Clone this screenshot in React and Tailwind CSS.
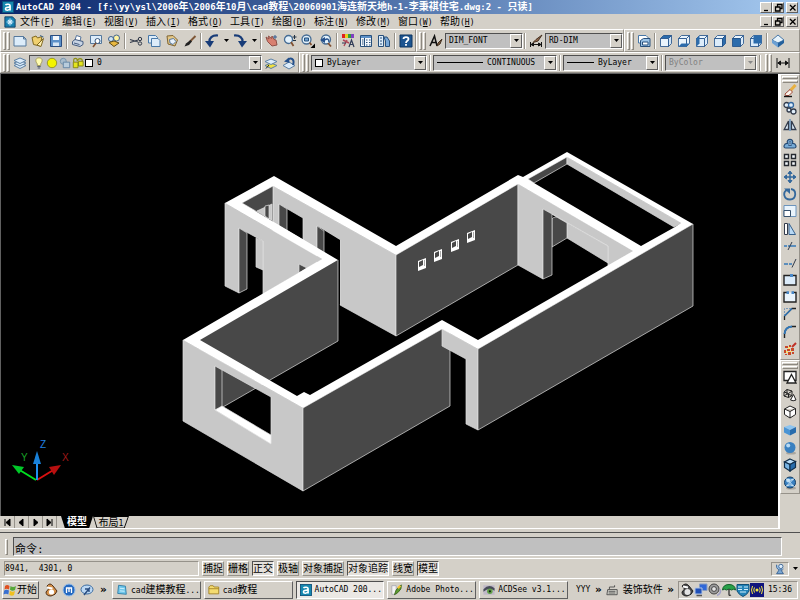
import React from "react";

const raised = "border border-t-white border-l-white border-r-[#606060] border-b-[#606060] bg-[#d4d0c8]";
const sunken = "border border-t-[#505050] border-l-[#505050] border-r-white border-b-white";

const menus = [
    ["文件", "F"], ["编辑", "E"], ["视图", "V"], ["插入", "I"], ["格式", "O"], ["工具", "T"],
    ["绘图", "D"], ["标注", "N"], ["修改", "M"], ["窗口", "W"], ["帮助", "H"],
];

const modifyTools = [
    "erase", "copy", "mirror", "offset", "array", "move", "rotate", "scale",
    "stretch", "trim", "extend", "breakPoint", "breakLine", "chamfer", "fillet", "explode",
];
const shadeTools = ["wire2d", "wire3d", "hidden", "flat", "gouraud", "flatEdges", "gouraudEdges"];

const modes = [
    ["捕捉", false], ["栅格", false], ["正交", true], ["极轴", false],
    ["对象捕捉", false], ["对象追踪", true], ["线宽", false], ["模型", true],
];

const tasks = [
    ["notepad", "cad建模教程..."],
    ["folder", "cad教程"],
    ["acad", "AutoCAD 200..."],
    ["photoshop", "Adobe Photo..."],
    ["acdsee", "ACDSee v3.1..."],
];

function cube(top, front, side) {
    return (
        <g stroke="#1c4c86" strokeWidth="0.8">
            <path d="M1.5 4.5 4.5 1.5H12.5L9.5 4.5Z" fill={top} />
            <path d="M1.5 4.5H9.5V12.5H1.5Z" fill={front} />
            <path d="M9.5 4.5 12.5 1.5V9.5L9.5 12.5Z" fill={side} />
        </g>
    );
}

const acad = (
    <>
        <rect x="0.5" y="0.5" width="13" height="13" fill="#1688b0" stroke="#0c4f78" />
        <path d="M4 4.8C5 3.4 9.5 3.2 9.5 6V11M9.5 7.2C6 7 4 7.6 4 9.2S8 11.6 9.5 9" fill="none" stroke="#fff" strokeWidth="1.8" />
    </>
);

const disc = (
    <>
        <ellipse cx="8" cy="12" rx="5" ry="1.6" fill="#a9a59e" />
        <circle cx="7" cy="6.5" r="5.5" fill="#3a80c0" />
        <circle cx="5.2" cy="4.5" r="2" fill="#b8daf4" />
    </>
);

const icons = {
    acad,
    child: (
        <>
            <path d="M1 1H10L13 4V13H1Z" fill="#1680b0" stroke="#103c60" />
            <path d="M7 3V11M3 7H11M4.5 4.5 9.5 9.5M9.5 4.5 4.5 9.5" stroke="#d8f0ff" strokeWidth="1.2" />
        </>
    ),
    new: <path d="M1 2.5H10.5L13 5V12H1Z M10.5 2.5V5H13" fill="#dcecfa" stroke="#55789c" />,
    open: (
        <>
            <path d="M1 3.5 5 2 6.5 4 11 2.5 9 12 2.5 10.5Z" fill="#f0d070" stroke="#806820" />
            <path d="M6 11 12.5 4.5 10 12.5Z" fill="#fff0b0" stroke="#806820" />
            <path d="M9 1.5 12.5 3" stroke="#406890" />
        </>
    ),
    save: (
        <>
            <path d="M1.5 1.5H12.5V12.5H1.5Z" fill="#5c90c8" stroke="#284c80" />
            <path d="M4 2H10V6H4Z" fill="#f4f8fc" />
            <path d="M4 8.5H10V12H4Z" fill="#d4e4f4" />
        </>
    ),
    print: (
        <>
            <path d="M4 6 5.5 1.5 10 3 9 7" fill="#fff" stroke="#54749c" />
            <path d="M1.5 7.5 4 5.5 12 7.5V10.5L9 12.5 1.5 10.5Z" fill="#c8d4e4" stroke="#445c80" />
            <path d="M3 9 8.5 10.5" stroke="#445c80" />
        </>
    ),
    preview: (
        <>
            <path d="M1.5 1.5H12.5V9.5H1.5Z" fill="#dcecfa" stroke="#55789c" />
            <circle cx="8.5" cy="7" r="2.5" fill="#fff" stroke="#33557c" />
            <path d="M7 9 4 13" stroke="#805030" strokeWidth="1.5" />
        </>
    ),
    publish: (
        <>
            <circle cx="9.5" cy="4" r="3" fill="#fff3a0" stroke="#406490" />
            <circle cx="4" cy="5" r="2.5" fill="#d0e4f4" stroke="#406490" />
            <path d="M2 8.5 7 7 12 9 7 12.5Z" fill="#e8b840" stroke="#604c18" />
        </>
    ),
    cut: (
        <g fill="none" stroke="#303848">
            <path d="M1 5.5 9 8M1 8.5 9 6" strokeWidth="1.2" />
            <circle cx="11" cy="5" r="1.7" />
            <circle cx="11" cy="9.5" r="1.7" />
        </g>
    ),
    copyclip: (
        <g fill="#dcecfa" stroke="#4878a8">
            <path d="M1.5 1.5H8.5L10.5 3.5V9H1.5Z" />
            <path d="M4.5 4.5H11L13 6.5V12.5H4.5Z" />
        </g>
    ),
    paste: (
        <>
            <path d="M2 2 8 1.5 12.5 6 10 12 3 10Z" fill="#e4c888" stroke="#806430" />
            <path d="M4.5 5.5 8.5 4.5 11 7.5 8 10.5 5 9Z" fill="#e8f2fc" stroke="#54749c" />
        </>
    ),
    match: (
        <>
            <path d="M12.5 2 7 7.5" stroke="#805838" strokeWidth="2" />
            <path d="M7.5 6 3 9.5 1.5 12.5 6 11 9 7.5Z" fill="#202020" />
        </>
    ),
    undo: (
        <>
            <path d="M13 1.5C7 1 4 4 4.5 8.5" fill="none" stroke="#183c78" strokeWidth="2.2" />
            <path d="M0 7H9L5 13.5Z" fill="#183c78" />
        </>
    ),
    redo: (
        <>
            <path d="M1 1.5C7 1 10 4 9.5 8.5" fill="none" stroke="#183c78" strokeWidth="2.2" />
            <path d="M14 7H5L9 13.5Z" fill="#183c78" />
        </>
    ),
    pan: (
        <>
            <path d="M1 3 4 5 3.5 2 6.5 4.5 7 2 9 5.5 11 6 12 11 7 12 2.5 7.5Z" fill="#d88070" stroke="#905048" />
            <path d="M10 1V5M8 3H12" stroke="#345c90" />
        </>
    ),
    zoom: (
        <>
            <circle cx="5.5" cy="5.5" r="4" fill="#e4f2fc" stroke="#466c94" strokeWidth="1.3" />
            <path d="M8 8 10.5 12" stroke="#805030" strokeWidth="1.8" />
            <path d="M11.5 1V5M9.5 3H13.5M10 6.5H13" stroke="#234" />
        </>
    ),
    zoomWin: (
        <>
            <circle cx="5.5" cy="5.5" r="4.5" fill="#e4f2fc" stroke="#466c94" strokeWidth="1.3" />
            <path d="M3.5 4H7.5V7H3.5Z" fill="#74a4d4" stroke="#24507c" />
            <path d="M8.5 8.5 10.5 11" stroke="#805030" strokeWidth="1.8" />
            <path d="M14 9.5V14H9.5Z" fill="#000" />
        </>
    ),
    zoomPrev: (
        <>
            <circle cx="7" cy="5.5" r="4.5" fill="#e4f2fc" stroke="#466c94" strokeWidth="1.3" />
            <path d="M1 6 6 3V9Z" fill="#24508c" />
            <path d="M6 6C8 4 10 5 10 8" fill="none" stroke="#24508c" strokeWidth="1.5" />
            <path d="M9 9 12 12.5" stroke="#805030" strokeWidth="1.8" />
        </>
    ),
    props: (
        <>
            <path d="M1 0H4V4H1Z" fill="#e02020" />
            <path d="M4 0H7V4H4Z" fill="#e8d020" />
            <path d="M7 0H10V4H7Z" fill="#30a040" />
            <path d="M10 0H13V4H10Z" fill="#8040c0" />
            <path d="M2 6 8 9M3 12 6 6" fill="none" stroke="#b04858" strokeWidth="1.4" />
            <path d="M8 13 10.5 6 13 13M9 10.5H12M1 9H5" fill="none" stroke="#303c58" strokeWidth="1.2" />
        </>
    ),
    design: (
        <>
            <path d="M1.5 1.5H12.5V12.5H1.5Z" fill="#f4f8fc" stroke="#28507c" />
            <path d="M2 2H12V4H2Z" fill="#5c90c8" />
            <path d="M5.5 4V12M3 6H4.5M3 8H4.5M3 10H4.5M7 6H8.5M10 6H11.5M7 8.5H8.5M10 8.5H11.5M7 11H8.5M10 11H11.5" stroke="#28507c" />
        </>
    ),
    palette: (
        <>
            <path d="M1.5 1.5H6.5V12.5H1.5Z" fill="#dcecfa" stroke="#28507c" />
            <path d="M3 4H5M3 7H5M3 10H5" stroke="#28507c" />
            <path d="M7 3H10L12.5 7V12.5H8.5V7Z" fill="#78a8d8" stroke="#28507c" />
        </>
    ),
    help: (
        <>
            <path d="M1 1H13V13H1Z" fill="#1c5490" stroke="#0c3460" />
            <path d="M4.5 5C4.5 2.5 9.5 2.5 9.5 5 9.5 6.8 7 6.8 7 9M7 10V11.8" fill="none" stroke="#fff" strokeWidth="1.8" />
        </>
    ),
    textStyle: (
        <>
            <path d="M1 12 5.5 2 8 12M3 8.5H8" fill="none" stroke="#111" strokeWidth="1.5" />
            <path d="M13 5 9 9 8 12 11 10Z" fill="#806040" stroke="#443020" />
        </>
    ),
    dimStyle: (
        <>
            <path d="M1.5 8V13M12.5 8V13M2 10.5H12M2 10.5 4.5 9V12ZM12 10.5 9.5 9V12Z" stroke="#111" fill="#111" />
            <path d="M13 1 7 5.5 4 8.5 9 7Z" fill="#94684c" stroke="#443020" />
        </>
    ),
    namedViews: (
        <>
            <path d="M1.5 1.5H9L11.5 4V9H1.5Z" fill="#fff" stroke="#4878a8" />
            <path d="M3.5 6.5 6.5 4.5H13V12.5H3.5Z" fill="#9cc4e8" stroke="#28507c" />
            <path d="M5.5 8H11V11H5.5Z" fill="#fff" stroke="#28507c" />
        </>
    ),
    top: cube("#2c6cac", "#eaf4fc", "#cfe2f4"),
    bottom: (
        <>
            {cube("#eaf4fc", "#eaf4fc", "#eaf4fc")}
            <path d="M1.5 12.5 4.5 9.5H12.5L9.5 12.5Z" fill="#2c6cac" />
        </>
    ),
    left: (
        <>
            {cube("#eaf4fc", "#dcecfa", "#dcecfa")}
            <path d="M1.5 4.5 4.5 1.5V9.5L1.5 12.5Z" fill="#2c6cac" />
        </>
    ),
    right: cube("#eaf4fc", "#dcecfa", "#2c6cac"),
    front: cube("#eaf4fc", "#2c6cac", "#dcecfa"),
    back: (
        <>
            {cube("#dcecfa", "#dcecfa", "#cfe2f4")}
            <path d="M4.5 1.5H12.5V9.5H4.5Z" fill="#2c6cac" />
        </>
    ),
    iso: (
        <>
            <path d="M7 1 13 6 7 9 1 6Z" fill="#e8f4fc" stroke="#4878a8" />
            <path d="M1 6 7 9V13.5L1 9Z" fill="#6ca0d4" />
            <path d="M13 6 7 9V13.5L13 9Z" fill="#24609c" />
        </>
    ),
    layers: (
        <g fill="#dcecfa" stroke="#5c80a4">
            <path d="M1 9.5 7 7 13 9.5 7 12.5Z" />
            <path d="M1 7 7 4.5 13 7 7 10Z" />
            <path d="M1 4.5 7 2 13 4.5 7 7.5Z" />
        </g>
    ),
    layerSet: (
        <g stroke="#5c80a4">
            <path d="M1 9.5 7 7 13 9.5 7 12.5Z" fill="#f0e040" />
            <path d="M1 5.5 7 3 13 5.5 7 8.5Z" fill="#dcecfa" />
            <path d="M2 12.5 5 9" stroke="#222" />
        </g>
    ),
    layerPrev: (
        <>
            <path d="M1 9.5 7 6 13 9.5 7 13Z" fill="#dcecfa" stroke="#5c80a4" />
            <path d="M11 9C13 3 9 1 5.5 4" fill="none" stroke="#24508c" strokeWidth="2" />
            <path d="M2 5.5 7 1.5 7.5 7Z" fill="#24508c" />
        </>
    ),
    bulb: (
        <>
            <path d="M7 1C2 1 3 6 5 8V10H9V8C11 6 12 1 7 1Z" fill="#fffcb0" stroke="#a09850" />
            <path d="M5 11H9M5.5 12.8H8.5" stroke="#404860" />
        </>
    ),
    sun: <circle cx="7" cy="7" r="5.5" fill="#f4f400" stroke="#8c8c20" />,
    vpFreeze: (
        <>
            <circle cx="5" cy="5" r="3.5" fill="#a8bccc" stroke="#7090a8" />
            <path d="M5 6H12.5V12.5H5Z" fill="#b8ccdc" stroke="#5c80a0" />
        </>
    ),
    lock: (
        <>
            <path d="M2 6V3.5C2 1 6 1 6 3.5V5M6.5 4.5C7 1 12 1 12 4.5V7" fill="none" stroke="#909010" strokeWidth="1.3" />
            <path d="M1.5 6H7V12.5H1.5ZM7.5 5H13V10.5H7.5Z" fill="#e4e420" stroke="#808010" />
        </>
    ),
    dimLinear: <path d="M1 2V12M13 2V12M1.5 7H12.5M2 7 4.5 5V9ZM12 7 9.5 5V9Z" stroke="#111" fill="#111" />,
    erase: (
        <>
            <path d="M12.5 1 7 7" stroke="#e8b040" strokeWidth="3" />
            <path d="M7 5.5 9.5 8 6 11.5H2.5L2 10Z" fill="#fbf4ec" stroke="#a04838" />
            <path d="M1 12.5H9" stroke="#111" strokeWidth="1.4" />
        </>
    ),
    copy: (
        <g fill="#e0eefa" stroke="#333c4c" strokeWidth="1.3">
            <circle cx="3.5" cy="4" r="2.5" />
            <circle cx="8" cy="4" r="2.5" stroke="#3468a0" />
            <circle cx="6" cy="9" r="2" />
            <circle cx="10.5" cy="10.5" r="2.5" />
        </g>
    ),
    mirror: (
        <>
            <path d="M5.5 3V11.5H1.2ZM8.5 3V11.5H12.8Z" fill="#e0eefa" stroke="#333c4c" strokeWidth="1.3" />
            <path d="M7 1V13" stroke="#3878b8" />
        </>
    ),
    offset: (
        <>
            <path d="M4.5 7.5C2.5 2 11.5 2 9.500 7.500 13 7 14.5 12 11 12H3C-.5 12 1 7 4.500 7.500Z" fill="#78acd8" stroke="#284c74" strokeWidth="1.2" />
            <path d="M5.5 9.5C7 8 5.500 5 7 5S7 8 8.500 9.500Z" fill="#dcecfa" stroke="#345c88" />
        </>
    ),
    array: <path d="M1.5 1.5H5.5V5.5H1.5ZM8.5 1.5H12.5V5.5H8.5ZM1.5 8.5H5.5V12.5H1.5ZM8.5 8.5H12.5V12.5H8.5Z" fill="#f4f8fc" stroke="#262a30" strokeWidth="1.4" />,
    move: (
        <g fill="#34689c" stroke="#34689c">
            <path d="M7 2V12M2 7H12" strokeWidth="1.5" />
            <path d="M7 1 9 3.5H5ZM7 13 9 10.5H5ZM1 7 3.5 5V9ZM13 7 10.5 5V9Z" />
        </g>
    ),
    rotate: (
        <>
            <path d="M8 2C14 3 13.500 12.500 7 12.500S-.5 5 4 3" fill="none" stroke="#34689c" strokeWidth="1.8" />
            <path d="M1 1.5H7V7Z" fill="#34689c" />
        </>
    ),
    scale: (
        <g stroke="#6c94bc">
            <path d="M1 1.500H13V12.500H1Z" fill="#eaf4fc" />
            <path d="M1 6.500H7.500V12.500H1Z" fill="#fff" stroke="#36506c" />
        </g>
    ),
    stretch: (
        <>
            <path d="M1.5 1.5H4.5V12.5H1.5Z" fill="#fff" stroke="#333c4c" />
            <path d="M6 1.5 12.5 12.5H6Z" fill="#b8d8f4" stroke="#36608c" />
        </>
    ),
    trim: (
        <>
            <path d="M1 7H4M5 7H13" stroke="#3478b8" strokeWidth="1.3" />
            <path d="M9 3 5 11" stroke="#333c4c" />
        </>
    ),
    extend: (
        <>
            <path d="M1 8H5M6 8H9" stroke="#3478b8" strokeWidth="1.3" />
            <path d="M13 3 9 11.500" stroke="#333c4c" />
        </>
    ),
    breakPoint: (
        <>
            <path d="M1 2.5H13V12H1Z" fill="#dcecfa" stroke="#222" strokeWidth="1.4" />
            <path d="M7 1H10V4H7Z" fill="#4888c8" />
        </>
    ),
    breakLine: (
        <>
            <path d="M1 2.5H13V12H1Z" fill="#eaf4fc" />
            <path d="M4.5 2.5H1V12H13V2.5H9.5" fill="none" stroke="#222" strokeWidth="1.4" />
            <path d="M3.5 1.2H6V4H3.5ZM8.5 1.2H11V4H8.5Z" fill="#4888c8" />
        </>
    ),
    chamfer: (
        <>
            <path d="M1.5 13V9L9 1.5H13" fill="none" stroke="#222" strokeWidth="1.3" />
            <path d="M1.5 9V1.5H9" fill="none" stroke="#7898b8" strokeDasharray="2 1" />
            <path d="M1.5 9 9 1.5" stroke="#3478b8" strokeWidth="1.4" />
        </>
    ),
    fillet: (
        <>
            <path d="M1.5 13V9Q2 2 9 1.5H13" fill="none" stroke="#222" strokeWidth="1.4" />
            <path d="M1.5 9Q2 2 9 1.5" fill="none" stroke="#3478b8" strokeWidth="2" />
        </>
    ),
    explode: (
        <>
            <path d="M13 1 9 5" stroke="#c03028" strokeWidth="2" />
            <path d="M2 4H5V6H2ZM6 3H8V5H6ZM4 7H7V9H4ZM8 6H11V9H8ZM1 8H3V11H1ZM5 10H8V13H5ZM9 10H11V12H9ZM2 12H4V13H2Z" fill="#c84828" />
            <path d="M5 5H7V7H5ZM3 9H5V11H3ZM7 9H9V10H7Z" fill="#ffe070" />
        </>
    ),
    wire2d: (
        <>
            <path d="M1 1.5H13V10.5H1Z" fill="#fff" stroke="#222" strokeWidth="1.3" />
            <path d="M8.5 4.5 13 13H4Z" fill="#fff" stroke="#222" strokeWidth="1.3" />
        </>
    ),
    wire3d: (
        <g fill="none" stroke="#222">
            <path d="M1 4 4 1.5 9 3V7.5L5.5 9.5 1 8ZM1 4 5.5 5.5V9.5M5.5 5.5 9 3M4 1.5V6L1 8M4 6 9 7.5" />
            <path d="M10.5 6.5 7.5 12Q10 13.5 13 12Z" fill="#fff" />
        </g>
    ),
    hidden: <path d="M7 1 12.5 3.5V9.5L7 13 1.5 9.5V4ZM1.5 4 7 6.5 12.5 3.5M7 6.5V13" fill="#fff" stroke="#222" />,
    flat: (
        <>
            <path d="M7 2 13 4 7 7 1 4Z" fill="#8cc4f0" />
            <path d="M1 4 7 7V12.5L1 9.5Z" fill="#4a94d4" />
            <path d="M13 4 7 7V12.5L13 9.5Z" fill="#286cac" />
        </>
    ),
    gouraud: disc,
    flatEdges: (
        <g stroke="#12304c" strokeWidth="1.2">
            <path d="M7 1 12.5 3.5 7 6.5 1.5 4Z" fill="#b8dcf8" />
            <path d="M1.5 4 7 6.5V13L1.5 9.5Z" fill="#78b4e4" />
            <path d="M12.5 3.5 7 6.5V13L12.5 9.5Z" fill="#286cac" />
        </g>
    ),
    gouraudEdges: (
        <>
            {disc}
            <circle cx="7" cy="6.5" r="5.5" fill="none" stroke="#123c64" />
            <path d="M3 2.5 11 10.5M11 2.5 3 10.5M3.5 3Q7 5.5 10.5 3M3.5 10Q7 7.5 10.5 10" fill="none" stroke="#d0e8f8" />
        </>
    ),
    start: (
        <>
            <path d="M2 3Q4 1 6.5 3L6 6.5Q3.5 5 1.5 6.5Z" fill="#e05020" />
            <path d="M7.5 3Q10 5 13 3L12 7Q9.5 8.5 7 6.8Z" fill="#58a838" />
            <path d="M1.2 7.5Q3.5 6 6 7.5L5.3 11.5Q3 10 0.5 11.5Z" fill="#3870d0" />
            <path d="M7 7.8Q9.5 9.5 12 8L11 12Q9 13.5 6.3 11.8Z" fill="#f0c020" />
        </>
    ),
    qq: (
        <>
            <path d="M3 3Q6-1 9 3L13 8Q12 12 7 13 2 13 2 9L4.5 6Z" fill="#d49048" stroke="#503018" />
            <path d="M3 4.5 8.5 5.5" stroke="#fff" strokeWidth="2" />
            <circle cx="7.5" cy="9" r="2.6" fill="#fff" />
        </>
    ),
    maxthon: (
        <>
            <circle cx="7" cy="7" r="6" fill="#2468c0" stroke="#94bce8" />
            <path d="M4.5 10V5H9.5V10M7 5V9" fill="none" stroke="#fff" strokeWidth="1.3" />
        </>
    ),
    messenger: (
        <>
            <ellipse cx="7" cy="6.5" rx="6" ry="4.5" fill="#bcd8f4" stroke="#3c6ca0" />
            <path d="M4 12 10 4.5M5 6H9V9" fill="none" stroke="#284c80" strokeWidth="1.4" />
        </>
    ),
    notepad: (
        <>
            <path d="M3 1.5 11 2.5 12 12 2 11Z" fill="#70c8ec" stroke="#2878a4" />
            <path d="M4.5 5 10 5.5M4.5 8 10 8.5" stroke="#d8f4ff" />
        </>
    ),
    folder: <path d="M1 3.5 2.5 2H6L7 3.5H12.5V11.5H1ZM1 5.5H12.5" fill="#f4dc70" stroke="#a08020" />,
    photoshop: (
        <>
            <path d="M1 2H6V12H1Z" fill="#f4f4f4" stroke="#889" strokeWidth="0.6" />
            <path d="M12 1Q13 6 8 10L4 12.5 6 7Z" fill="#5c9c30" stroke="#386418" />
            <path d="M8 5 11 2" stroke="#f0c030" strokeWidth="2.5" />
        </>
    ),
    acdsee: (
        <>
            <path d="M0.5 1.5H13.5V12.5H0.5Z" fill="#c0b8c8" />
            <path d="M0.5 6Q7-1 13.5 5V8Q7 3 0.5 9Z" fill="#484c58" />
            <circle cx="8" cy="8.5" r="3.2" fill="#60a048" />
            <circle cx="8" cy="8.5" r="1.3" fill="#142014" />
        </>
    ),
    keyboard: (
        <>
            <path d="M2 6.5H13V12.5H1Z" fill="#d8d8d0" stroke="#444" />
            <path d="M3 8.5H11M3 10.5H11M4 6V3.5H10V1.5" fill="none" stroke="#444" />
        </>
    ),
    penguin: (
        <>
            <path d="M2 3Q6-1 9 3L13 8Q12 12 7 13 2 13 2 9L4.5 6Z" fill="#484848" stroke="#222" />
            <path d="M3 3.5 8 4.5" stroke="#fff" strokeWidth="2" />
            <circle cx="7.5" cy="9" r="3" fill="#e4e4e4" />
        </>
    ),
    network: (
        <>
            <path d="M5.5 1H13V7.5H5.5Z" fill="#3068d8" stroke="#889cc0" />
            <path d="M1 5H8V11H1Z" fill="#2050b8" stroke="#b0c4e4" />
            <path d="M2.5 12.5H8" stroke="#555" strokeWidth="1.5" />
        </>
    ),
    volume: (
        <>
            <circle cx="6" cy="6" r="5" fill="#9c9c9c" stroke="#444" />
            <circle cx="6" cy="6" r="2.4" fill="#e4e4e4" stroke="#444" />
            <path d="M12 6Q14 10 9 12.5" fill="none" stroke="#a4a4c8" strokeWidth="1.5" />
        </>
    ),
    umbrella: (
        <>
            <path d="M0.5 7Q1 1.5 7 1.5T13.5 7Q11.5 5.5 9.5 7 7 5 4.5 7 2.5 5.5 0.5 7Z" fill="#28a048" stroke="#106028" />
            <path d="M7 6V11.5Q7 13 9 12" fill="none" stroke="#333" strokeWidth="1.3" />
        </>
    ),
    shield: (
        <>
            <path d="M1 1.5H13V8Q11 12 7 13.5 3 12 1 8Z" fill="#2484b8" stroke="#105078" />
            <path d="M2 4H6M8 4H12M2 6.5H6M8 6.5H12M4 9H10" stroke="#d4f0fc" strokeWidth="1.2" />
        </>
    ),
    wireless: (
        <>
            <path d="M0 0H14V14H0Z" fill="#10147c" />
            <circle cx="7" cy="7" r="1.5" fill="#f4e840" />
            <path d="M4.5 4.5Q3 7 4.5 9.5M9.5 4.5Q11 7 9.5 9.5M2.5 3Q0.5 7 2.5 11M11.5 3Q13.5 7 11.5 11" fill="none" stroke="#f4e840" />
        </>
    ),
    satellite: (
        <>
            <path d="M3 2Q2 9 10 8L11 7" fill="#a4c8ec" stroke="#305c90" />
            <circle cx="8" cy="4" r="2.5" fill="#dcecfa" stroke="#305c90" />
            <path d="M6 8 3 12.5H11L8 8" fill="#7ca8d4" stroke="#305c90" />
        </>
    ),
};

function Icon({ name, className = "size-[14px]" }) {
    return (
        <svg viewBox="0 0 14 14" className={`shrink-0 ${className}`} aria-hidden="true">
            {icons[name]}
        </svg>
    );
}

// Latin runs take the inherited mono size, Chinese runs are set larger
function Text({ children }) {
    return (
        <span className="whitespace-pre">
            {children.split(/([\u4e00-\u9fff]+)/).filter(Boolean).map((run, i) =>
                /[\u4e00-\u9fff]/.test(run) ? <span key={i} className="text-[10px]">{run}</span> : run
            )}
        </span>
    );
}

function Tool({ name }) {
    return (
        <button aria-label={name} className="flex w-[18px] shrink-0 items-center justify-center">
            <Icon name={name} />
        </button>
    );
}

function Tools({ names }) {
    return names.map(name => <Tool key={name} name={name} />);
}

function Sep() {
    return <span className="mx-px h-4 w-[2px] shrink-0 border-l border-[#96928a] border-r border-r-white" />;
}

function Grip() {
    return (
        <span className="flex w-[10px] shrink-0 justify-center gap-px">
            <span className="h-[18px] w-[3px] border border-t-white border-l-white border-r-[#8c8880] border-b-[#8c8880]" />
            <span className="h-[18px] w-[3px] border border-t-white border-l-white border-r-[#8c8880] border-b-[#8c8880]" />
        </span>
    );
}

function Band({ className = "shrink-0", children }) {
    return (
        <div className={`flex items-center border border-t-white border-l-white border-r-[#96928a] border-b-[#96928a] ${className}`}>
            {children}
        </div>
    );
}

function DropArrow({ dim }) {
    return (
        <span className={`flex h-[14px] w-3 shrink-0 items-center justify-center ${raised}`}>
            <svg viewBox="0 0 5 3" className="h-[3px] w-[5px]"><path d="M0 0H5L2.5 3Z" fill={dim ? "#888" : "#000"} /></svg>
        </span>
    );
}

function Combo({ label, value, width, dim, children }) {
    return (
        <label className={`flex h-4 shrink-0 items-center bg-[#c0c0c0] pl-[3px] ${sunken} ${width}`}>
            {children}
            <select
                aria-label={label}
                disabled={dim}
                className={`h-[14px] min-w-0 flex-1 appearance-none bg-transparent leading-[14px] outline-none ${dim ? "text-[#808080]" : "text-black"}`}
            >
                <option>{value}</option>
            </select>
            <DropArrow dim={dim} />
        </label>
    );
}

function WindowButtons() {
    const glyphs = [
        ["Minimize", "M2 7.5H6"],
        ["Restore", "M3.5 3.5V1.5H8V5.5H6M1.5 4H6V8H1.5Z"],
        ["Close", "M2 2 7.5 7.5M7.5 2 2 7.5"],
    ];
    return (
        <div className="ml-auto flex pr-[2px]">
            {glyphs.map(([label, d]) => (
                <button key={label} aria-label={label} className={`flex h-[11px] w-3 items-center justify-center last:ml-[2px] ${raised}`}>
                    <svg viewBox="0 0 9 9" className="size-[9px]"><path d={d} fill="none" stroke="#000" strokeWidth="1.3" /></svg>
                </button>
            ))}
        </div>
    );
}

function SideBar({ names, className }) {
    return (
        <div className={`flex flex-col items-center border border-t-white border-l-white border-r-[#96928a] border-b-[#96928a] ${className}`}>
            <span className="mt-px h-[3px] w-4 shrink-0 border border-t-white border-l-white border-r-[#8c8880] border-b-[#8c8880]" />
            <span className="mt-px h-[3px] w-4 shrink-0 border border-t-white border-l-white border-r-[#8c8880] border-b-[#8c8880]" />
            <div className="flex flex-1 flex-col justify-between pt-px pb-[3px]">
                {names.map(name => (
                    <button key={name} aria-label={name}><Icon name={name} className="block size-[14px]" /></button>
                ))}
            </div>
        </div>
    );
}

function Model() {
    const light = "#c8c8c8";
    const dark = "#484848";
    return (
        <svg viewBox="1 74 777 442" className="absolute inset-0 size-full" role="img" aria-label="3D model">
            {/* back left room */}
            <g stroke="#e0e0e0" strokeWidth="0.7">
                <path d="M273 186 396 255V336L340 305V240L317 226V270L273 266Z" fill={light} />
                <path d="M242 203 273 186V221Z" fill={dark} />
                <path d="M257 211 272 204V220Z" fill={light} />
                <path d="M265 206 269 205V219L265 216Z" fill={dark} />
                <path d="M279 204 303 218V240L279 226Z" fill="#000" />
                <path d="M279 204 287 209V231L279 226Z" fill={dark} />
                <path d="M317 226 340 240V305L317 290Z" fill="#000" stroke="none" />
                <path d="M317 226 324 231V254L317 250Z" fill={dark} />
                <path d="M225 203 322 259 263 294V241L239 228V293L225 286Z" fill={light} />
                <path d="M239 228 247 233V289L239 293Z" fill={dark} />
                <path d="M256 238 263 241V270L256 267Z" fill={light} />
                <path d="M299 264 307 268 299 273Z" fill={dark} />
            </g>
            {/* party wall with small openings */}
            <g stroke="#e0e0e0" strokeWidth="0.7">
                <path d="M396 255 518 184V265L396 336Z" fill={dark} />
                {[[418, 258], [434, 249], [451, 239], [467, 230]].map(([x, y]) => (
                    <g key={x} transform={`translate(${x} ${y})`} stroke="none">
                        <path d="M0 3 8 0V10L0 13Z" fill="#fff" />
                        <path d="M1 4 5 2V7L1 9Z" fill={dark} />
                        <path d="M6 2 7 2V8L6 8Z" fill="#aaa" />
                    </g>
                ))}
            </g>
            {/* back right room */}
            <g stroke="#e0e0e0" strokeWidth="0.7">
                <path d="M528 179 567 157V164L534 183Z" fill={dark} />
                <path d="M567 157 681 223 674 227 567 164Z" fill={light} />
                <path d="M518 184 634 251 608 266V246L543 209V279L518 265Z" fill={light} />
                <path d="M567 223 608 246V263L567 238Z" fill={light} />
                <path d="M552 219Q555 215 560 219L567 223V238L552 247Z" fill={dark} />
                <path d="M543 209 552 214V275L543 279Z" fill={dark} />
                <path d="M552 214 608 246" />
            </g>
            {/* front room */}
            <g stroke="#e0e0e0" strokeWidth="0.7">
                <path d="M199 340 338 260V341L223 407 199 400Z" fill={dark} stroke="none" />
                <path d="M338 260V341L223 407" fill="none" />
                <path fillRule="evenodd" d="M183 340 303 408V491L183 421ZM215 366V410L271 443V397Z" fill={light} />
                <path d="M215 366 222 370V407L215 410Z" fill={dark} />
                <path d="M215 410 222 406 271 435V444Z" fill="#fff" />
                <path d="M303 408 442 329 450 334V406L303 491Z" fill={dark} />
                <path d="M442 329 478 349V430L466 424V359L442 346Z" fill={light} />
                <path d="M478 349 693 224V306L478 430Z" fill={dark} />
            </g>
            {/* tops of the walls */}
            <g fill="#fff">
                <path fillRule="evenodd" d="M225 203 274 176 396 246 518 175 523 177 567 152 693 224 478 349 442 329 303 408 183 340 322 259ZM242 203 338 260 200 340 297 396 304 392 310 395 442 320 478 340 633 251 518 184 396 255 273 186ZM528 179 534 183 641 246 675 227 681 223 567 157Z" />
            </g>
            {/* ucs icon */}
            <g strokeWidth="2">
                <path d="M36 480 18 469" stroke="#00e020" />
                <path d="M12 465 24 467 19 474Z" fill="#00c828" />
                <path d="M37 480 55 469" stroke="#d81010" />
                <path d="M61 465 49 467 54 475Z" fill="#b81010" />
                <path d="M37 480V460" stroke="#2090f0" />
                <path d="M37 451 41 464H33Z" fill="#1880d8" />
            </g>
            <g className="font-['Liberation_Sans'] text-[10px]">
                <text x="40" y="448" fill="#2080e0">Z</text>
                <text x="21" y="461" fill="#18a028">Y</text>
                <text x="62" y="461" fill="#a01818">X</text>
            </g>
        </svg>
    );
}

function LayoutTabs() {
    const arrows = ["M2 1V8M7 1 3 4.5 7 8Z", "M6 1 2 4.5 6 8Z", "M3 1 7 4.5 3 8Z", "M7 1V8M2 1 6 4.5 2 8Z"];
    return (
        <div className="flex h-[13px] shrink-0 items-center border-b border-white pl-px">
            {arrows.map(d => (
                <button key={d} aria-label="Scroll tabs" className="flex h-3 w-[14px] items-center justify-center border-r border-[#96928a]">
                    <svg viewBox="0 0 9 9" className="size-[9px]"><path d={d} stroke="#000" /></svg>
                </button>
            ))}
            <button className="ml-1 h-3 w-8 bg-black leading-3 font-bold text-white [clip-path:polygon(0_0,100%_0,88%_100%,12%_100%)]"><Text>模型</Text></button>
            <button className="h-3 w-9 bg-black [clip-path:polygon(0_0,100%_0,88%_100%,10%_100%)]">
                <span className="block h-[11px] bg-[#d4d0c8] leading-[11px] [clip-path:polygon(1px_0,97%_0,86%_100%,12%_100%)]"><Text>布局1</Text></span>
            </button>
        </div>
    );
}

function Taskbar() {
    return (
        <footer className="flex h-[22px] shrink-0 items-center border-t border-white px-[2px]">
            <button className={`flex h-[18px] w-[37px] shrink-0 items-center ${raised}`}>
                <Icon name="start" /><Text>开始</Text>
            </button>
            <div className="ml-[5px] flex w-[68px] shrink-0 items-center gap-1">
                <Icon name="qq" /><Icon name="maxthon" /><Icon name="messenger" />
                <span className="pl-[2px] text-[11px] font-bold">»</span>
            </div>
            <div className="flex min-w-0 flex-1 gap-[3px]">
                {tasks.map(([icon, title]) => (
                    <button
                        key={title}
                        className={`flex h-[18px] min-w-0 flex-1 items-center gap-[3px] overflow-hidden pl-[3px] ${icon === "acad" ? `bg-[#ebe8e4] ${sunken}` : raised}`}
                    >
                        <Icon name={icon} className="size-3" /><Text>{title}</Text>
                    </button>
                ))}
            </div>
            <div className="flex w-[110px] shrink-0 items-center justify-between pr-1 pl-2">
                <span>YYY</span>
                <span className="text-[11px] font-bold">»</span>
                <Icon name="keyboard" className="size-3" />
                <Text>装饰软件</Text>
                <span className="text-[11px] font-bold">»</span>
            </div>
            <div className="flex h-[18px] shrink-0 items-center border border-t-[#96928a] border-l-[#96928a] border-r-white border-b-white px-px">
                {["penguin", "network", "volume", "umbrella", "shield", "wireless"].map(name => (
                    <Icon key={name} name={name} />
                ))}
                <span className="px-1">15:36</span>
            </div>
        </footer>
    );
}

export default function App() {
    return (
        <div className="flex h-screen flex-col overflow-hidden bg-[#d4d0c8] font-['DejaVu_Sans_Mono','Noto_Sans_CJK_SC',monospace] text-[8px] leading-none text-black">
            <header className="flex h-[14px] shrink-0 items-center gap-[2px] bg-linear-to-r from-[#0a246a] to-[#a6caf0] pl-[2px] text-white">
                <Icon name="acad" className="size-3" />
                <h1 className="text-[9px] font-bold">
                    <Text>{"AutoCAD 2004 - [f:\\yy\\ysl\\2006年\\2006年10月\\cad教程\\20060901海连新天地h-1-李秉祺住宅.dwg:2 - 只读]"}</Text>
                </h1>
                <WindowButtons />
            </header>

            <nav className="flex h-[15px] shrink-0 items-center pl-1">
                <Icon name="child" className="mr-1 size-3" />
                {menus.map(([name, key]) => (
                    <button key={key} className="w-[42px] text-left whitespace-nowrap">
                        <Text>{name}</Text>(<u>{key}</u>)
                    </button>
                ))}
                <WindowButtons />
            </nav>

            <div className="flex h-[23px] shrink-0 overflow-hidden">
                <Band>
                    <Grip />
                    <Tools names={["new", "open", "save"]} /><Sep />
                    <Tools names={["print", "preview", "publish"]} /><Sep />
                    <Tools names={["cut", "copyclip", "paste", "match"]} /><Sep />
                    {["undo", "redo"].map(name => (
                        <React.Fragment key={name}>
                            <Tool name={name} />
                            <button aria-label={`${name} list`} className="flex w-[10px] shrink-0 justify-center">
                                <svg viewBox="0 0 5 3" className="h-[3px] w-[5px]"><path d="M0 0H5L2.5 3Z" /></svg>
                            </button>
                        </React.Fragment>
                    ))}
                    <Sep />
                    <Tools names={["pan", "zoom", "zoomWin", "zoomPrev"]} /><Sep />
                    <Tools names={["props", "design", "palette"]} /><Sep />
                    <Tool name="help" />
                </Band>
                <Band>
                    <Grip />
                    <Tool name="textStyle" />
                    <Combo label="Text style" value="DIM_FONT" width="w-[78px]" /><Sep />
                    <Tool name="dimStyle" />
                    <Combo label="Dimension style" value="RD-DIM" width="w-[78px]" />
                </Band>
                <Band className="flex-1">
                    <Grip />
                    <Tool name="namedViews" /><Sep />
                    <Tools names={["top", "bottom", "left", "right", "front", "back"]} /><Sep />
                    <Tool name="iso" />
                </Band>
            </div>

            <div className="flex h-[22px] shrink-0 overflow-hidden border-b border-[#606060]">
                <Band>
                    <Grip />
                    <Tool name="layers" />
                    <Combo label="Layer" value="0" width="w-[233px]">
                        {["bulb", "sun", "vpFreeze", "lock"].map(name => <Icon key={name} name={name} className="mr-px size-3" />)}
                        <span className="mr-1 size-2 border border-black bg-white" />
                    </Combo>
                    <Tools names={["layerSet", "layerPrev"]} />
                </Band>
                <Band className="flex-1 gap-px">
                    <Grip />
                    <Combo label="Color" value="ByLayer" width="w-[116px]">
                        <span className="mr-1 size-2 border border-black bg-white" />
                    </Combo>
                    <Sep />
                    <Combo label="Linetype" value="CONTINUOUS" width="w-[124px]">
                        <span className="mr-1 w-[46px] border-t border-black" />
                    </Combo>
                    <Sep />
                    <Combo label="Lineweight" value="ByLayer" width="w-[96px]">
                        <span className="mr-1 w-[27px] border-t border-black" />
                    </Combo>
                    <Sep />
                    <Combo label="Plot style" value="ByColor" width="w-[92px]" dim />
                    <Sep />
                    <Grip />
                    <Tool name="dimLinear" />
                </Band>
            </div>

            <main className="flex min-h-0 flex-1">
                <div className="flex min-w-0 flex-1 flex-col">
                    <div className="relative min-h-0 flex-1 border-l border-[#606060] bg-black"><Model /></div>
                    <LayoutTabs />
                </div>
                <aside className="flex w-[22px] shrink-0 flex-col border-l-2 border-white">
                    <SideBar names={modifyTools} className="h-[286px]" />
                    <SideBar names={shadeTools} className="h-[134px]" />
                </aside>
            </main>

            <div className="flex h-[30px] shrink-0 flex-col pt-[3px]">
                <div className="h-px bg-[#505050]" />
                <label className="mt-1 flex flex-1 items-stretch pr-[18px]">
                    <span className="flex w-[13px] items-center justify-center">
                        <span className="h-4 w-[3px] border border-t-white border-l-white border-r-[#8c8880] border-b-[#8c8880]" />
                    </span>
                    <span className={`flex flex-1 items-end bg-[#c0c0c0] pl-px text-[11px] ${sunken}`}>
                        命令:
                        <input aria-label="命令" className="h-3 flex-1 bg-transparent pl-1 outline-none" />
                    </span>
                </label>
                <div className="mt-[2px] h-px bg-white" />
            </div>

            <div className="flex h-[19px] shrink-0 items-center gap-[3px] pl-1">
                <span className="flex h-[15px] w-[195px] items-center border border-t-[#96928a] border-l-[#96928a] border-r-white border-b-white whitespace-pre">
                    8941,  4301, 0
                </span>
                {modes.map(([name, on]) => (
                    <button key={name} className={`h-[15px] px-0 ${on ? `bg-[#e4e1dc] ${sunken}` : "border border-t-white border-l-white border-r-[#96928a] border-b-[#96928a]"}`}>
                        <Text>{name}</Text>
                    </button>
                ))}
                <div className="ml-auto flex items-center gap-1 pr-[2px]">
                    <span className="flex h-[14px] w-[18px] items-center justify-center border border-t-[#96928a] border-l-[#96928a] border-r-white border-b-white">
                        <Icon name="satellite" className="size-3" />
                    </span>
                    <svg viewBox="0 0 5 3" className="h-[3px] w-[5px]"><path d="M0 0H5L2.5 3Z" /></svg>
                </div>
            </div>

            <Taskbar />
        </div>
    );
}
